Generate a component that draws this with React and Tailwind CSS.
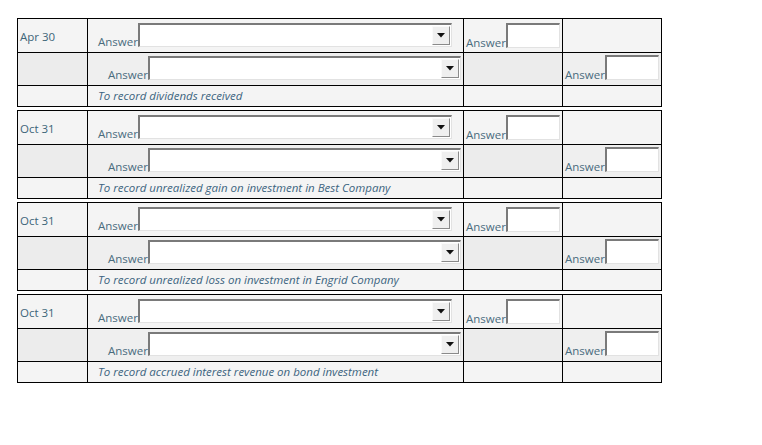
const entries = [
  { date: 'Apr 30', memo: 'To record dividends received' },
  { date: 'Oct 31', memo: 'To record unrealized gain on investment in Best Company' },
  { date: 'Oct 31', memo: 'To record unrealized loss on investment in Engrid Company' },
  { date: 'Oct 31', memo: 'To record accrued interest revenue on bond investment' },
];

function Dropdown({ width }) {
  return (
    <div
      className="flex h-[24px] bg-white border-t-2 border-l-2 border-t-[#7a7a7a] border-l-[#7a7a7a] border-b border-r border-b-[#e2e2e2] border-r-[#e2e2e2] items-start justify-end pt-[1px] pr-[1px]"
      style={{ width }}
    >
      <div className="w-[18px] h-[19px] bg-[#efefef] border border-t-[#fafafa] border-l-[#fafafa] border-b-[#8a8a8a] border-r-[#8a8a8a] flex items-center justify-center">
        <svg width="8" height="5" viewBox="0 0 8 5">
          <path d="M0 0H8L4 4.5Z" fill="#111" />
        </svg>
      </div>
    </div>
  );
}

function TextBox() {
  return (
    <div className="w-[54px] h-[25px] bg-white border-t-2 border-l-2 border-t-[#7a7a7a] border-l-[#7a7a7a] border-b border-r border-b-[#e2e2e2] border-r-[#e2e2e2]" />
  );
}

function Label() {
  return <span className="text-[#4a6c7e] leading-[12px] mb-[-1px]">Answer</span>;
}

function Cell({ className = '', children }) {
  return <div className={`border-r border-b border-black ${className}`}>{children}</div>;
}

function Entry({ date, memo }) {
  return (
    <div className="grid grid-cols-[70px_376px_99px_99px] grid-rows-[34px_33px_21px] border-l border-t border-black w-[645px]">
      <Cell className="bg-[#f4f4f4] pl-[2px] pt-[11px] text-[#3d6579] leading-[14px]">{date}</Cell>
      <Cell className="bg-[#f4f4f4] flex items-end pl-[10px] pb-[5px]">
        <Label />
        <Dropdown width={314} />
      </Cell>
      <Cell className="bg-[#f4f4f4] flex items-end pl-[2px] pb-[4px]">
        <Label />
        <TextBox />
      </Cell>
      <Cell className="bg-[#f4f4f4]" />

      <Cell className="bg-[#ececec]" />
      <Cell className="bg-[#efefef] flex items-end pl-[20px] pb-[5px]">
        <Label />
        <Dropdown width={313} />
      </Cell>
      <Cell className="bg-[#ececec]" />
      <Cell className="bg-[#efefef] flex items-end pl-[2px] pb-[5px]">
        <Label />
        <TextBox />
      </Cell>

      <Cell className="bg-[#f4f4f4]" />
      <Cell className="bg-[#f4f4f4] pl-[10px] pt-[2px] italic text-[#3c6480] leading-[16px]">{memo}</Cell>
      <Cell className="bg-[#f4f4f4]" />
      <Cell className="bg-[#f4f4f4]" />
    </div>
  );
}

export default function App() {
  return (
    <div className="w-[762px] h-[445px] bg-white pl-[17px] pt-[18px] text-[11.5px] font-['Open_Sans',sans-serif]">
      <div className="flex flex-col gap-[3px]">
        {entries.map((e, i) => (
          <Entry key={i} {...e} />
        ))}
      </div>
    </div>
  );
}
